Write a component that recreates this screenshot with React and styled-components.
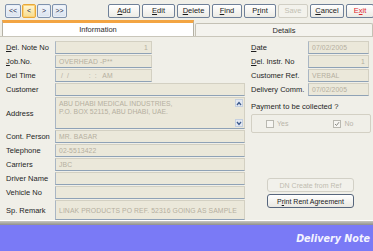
import React from "react";
import styled, { createGlobalStyle, css } from "styled-components";

const Global = createGlobalStyle`
  html, body { margin: 0; padding: 0; background: #f0efe8; }
  body { font-family: "Liberation Sans", Arial, sans-serif; }
`;

const Screen = styled.div`
  width: 373px;
  height: 251px;
  display: flex;
  flex-direction: column;
  background: #f0efe8;
  overflow: hidden;
`;

const Toolbar = styled.div`
  height: 21px;
  flex: none;
  display: flex;
  align-items: center;
  padding-left: 5px;
  box-sizing: border-box;
`;

const NavGroup = styled.div`
  display: flex;
  gap: 1px;
`;

const Actions = styled.div`
  display: flex;
  gap: 2px;
  margin-left: 41px;
`;

const buttonBase = css`
  box-sizing: border-box;
  height: 14px;
  display: flex;
  align-items: center;
  justify-content: center;
  font-size: 7.5px;
  border-radius: 2px;
  font-family: "Liberation Sans", Arial, sans-serif;
  white-space: nowrap;
`;

const NavButton = styled.div`
  ${buttonBase};
  width: ${(p) => p.$w}px;
  font-size: 7px;
  color: #1d2b4a;
  border: 1px solid ${(p) => (p.$focus ? "#e8a838" : "#7f92ad")};
  background: ${(p) =>
    p.$focus
      ? "linear-gradient(#fff7d6, #f7dc8c)"
      : "linear-gradient(#f4f7fb, #d9e2ee)"};
  box-shadow: inset 0 0 0 1px ${(p) => (p.$focus ? "#fbd27a" : "#e9eef6")};
`;

const ToolButton = styled.div`
  ${buttonBase};
  width: ${(p) => p.$w}px;
  color: ${(p) => (p.$disabled ? "#c2bfb3" : p.$danger ? "#e0242c" : "#1b1b1b")};
  border: 1px solid ${(p) => (p.$disabled ? "#d0cec4" : "#6f8098")};
  background: ${(p) =>
    p.$disabled ? "#f3f2ec" : "linear-gradient(#ffffff, #ecebe5)"};
  u { text-decoration: underline; }
`;

const TabBar = styled.div`
  height: 16px;
  flex: none;
  display: flex;
  align-items: flex-end;
  padding-left: 2px;
  box-sizing: border-box;
  border-bottom: 1px solid #c9c6ba;
`;

const Tab = styled.div`
  box-sizing: border-box;
  display: flex;
  align-items: center;
  justify-content: center;
  font-size: 7.5px;
  color: #2a2a2a;
  ${(p) =>
    p.$active
      ? css`
          width: 192px;
          height: 16px;
          background: #ffffff;
          border: 1px solid #b4b1a5;
          border-top: 3px solid #f3a543;
          border-bottom: none;
        `
      : css`
          flex: 1;
          height: 13px;
          margin-left: 1px;
          background: #f4f3ee;
          border: 1px solid #c4c1b5;
          border-bottom: none;
          border-radius: 2px 2px 0 0;
        `}
`;

const Content = styled.div`
  flex: 1;
  display: flex;
  padding: 4px 0 0 6px;
  box-sizing: border-box;
  border-bottom: 1px solid #ffffff;
`;

const LeftCol = styled.div`
  width: 239px;
  display: flex;
  flex-direction: column;
  gap: 1px;
`;

const RightCol = styled.div`
  margin-left: 6px;
  width: 120px;
  display: flex;
  flex-direction: column;
  gap: 1px;
`;

const Row = styled.div`
  display: flex;
  align-items: center;
  height: ${(p) => p.$h || 13}px;
`;

const Label = styled.div`
  width: ${(p) => p.$w || 49}px;
  flex: none;
  font-size: 7.5px;
  color: #1e1e1e;
  white-space: nowrap;
  u { text-decoration: underline; }
`;

const Field = styled.div`
  box-sizing: border-box;
  width: ${(p) => p.$w}px;
  height: 100%;
  flex: none;
  background: #ebe8da;
  border: 1px solid #d3d0c2;
  border-left-color: #a9b6c4;
  border-bottom-color: #8fa2b6;
  display: flex;
  align-items: center;
  justify-content: ${(p) => (p.$right ? "flex-end" : "flex-start")};
  padding: 0 3px;
  font-size: 6.8px;
  color: #b5af9f;
  white-space: pre;
  overflow: hidden;
  letter-spacing: 0.1px;
`;

const AreaField = styled.div`
  box-sizing: border-box;
  width: ${(p) => p.$w}px;
  height: 100%;
  background: #ebe8da;
  border: 1px solid #d3d0c2;
  border-left-color: #a9b6c4;
  border-bottom-color: #8fa2b6;
  display: flex;
  font-size: 6.8px;
  color: #b5af9f;
`;

const AreaText = styled.div`
  flex: 1;
  padding: 2px 3px;
  line-height: 8px;
`;

const ScrollBar = styled.div`
  width: 9px;
  display: flex;
  flex-direction: column;
  justify-content: space-between;
  padding: 1px 0;
`;

const ScrollBtn = styled.div`
  width: 8px;
  height: 8px;
  background: #e3e8f2;
  border: 1px solid #c5d0e0;
  box-sizing: border-box;
  display: flex;
  align-items: center;
  justify-content: center;
`;

const Question = styled.div`
  font-size: 7.6px;
  color: #1e1e1e;
  margin-top: 5px;
  height: 9px;
  white-space: nowrap;
`;

const Group = styled.div`
  margin-top: 2px;
  height: 19px;
  box-sizing: border-box;
  border: 1px solid #d3d0c4;
  border-radius: 2px;
  display: flex;
  align-items: center;
  padding-left: 14px;
  gap: 45px;
`;

const Check = styled.div`
  display: flex;
  align-items: center;
  gap: 3px;
  font-size: 7px;
  color: #b8b4a8;
`;

const Box = styled.div`
  width: 8px;
  height: 8px;
  box-sizing: border-box;
  border: 1px solid #b9b8b0;
  background: #f7f6f2;
  display: flex;
  align-items: center;
  justify-content: center;
`;

const SideButton = styled.div`
  ${buttonBase};
  height: 14px;
  width: 87px;
  margin-left: 16px;
  margin-top: ${(p) => p.$mt || 0}px;
  font-size: 7px;
  color: ${(p) => (p.$disabled ? "#bfbcb0" : "#1b1b1b")};
  border: 1px solid ${(p) => (p.$disabled ? "#d2d0c6" : "#56657c")};
  border-radius: 3px;
  background: ${(p) => (p.$disabled ? "#f2f1eb" : "linear-gradient(#ffffff, #e9e8e2)")};
  u { text-decoration: underline; }
`;

const Separator = styled.div`
  height: 4px;
  flex: none;
  background: linear-gradient(#c8c7c0, #8f8f8b);
`;

const Footer = styled.div`
  height: 26px;
  flex: none;
  background: #7a7af6;
  display: flex;
  align-items: center;
  justify-content: flex-end;
  padding-right: 3px;
`;

const FooterTitle = styled.div`
  font-family: "DejaVu Sans", Verdana, sans-serif;
  font-style: italic;
  font-weight: bold;
  font-size: 9.6px;
  color: #f4f4ff;
`;

const Chevron = ({ up }) => (
  <svg width="6" height="5" viewBox="0 0 6 5">
    <path
      d={up ? "M1 4 L3 1.5 L5 4" : "M1 1 L3 3.5 L5 1"}
      stroke="#3b5a8c"
      strokeWidth="1.3"
      fill="none"
    />
  </svg>
);

export default function App() {
  const left = [
    { l: <><u>D</u>el. Note No</>, v: "1", w: 97, right: true },
    { l: <><u>J</u>ob.No.</>, v: "OVERHEAD -P**", w: 97 },
    { l: "Del Time", v: " /  /          :  :   AM", w: 97 },
    { l: "Customer", v: "", w: 190 },
  ];
  const left2 = [
    { l: "Cont. Person", v: "MR. BASAR" },
    { l: "Telephone", v: "02-5513422" },
    { l: "Carriers", v: "JBC" },
    { l: "Driver Name", v: "" },
    { l: "Vehicle No", v: "" },
  ];
  const right = [
    { l: <><u>D</u>ate</>, v: "07/02/2005" },
    { l: <><u>D</u>el. Instr. No</>, v: "1", right: true },
    { l: "Customer Ref.", v: "VERBAL" },
    { l: "Delivery Comm.", v: "07/02/2005" },
  ];
  return (
    <>
      <Global />
      <Screen>
        <Toolbar>
          <NavGroup>
            <NavButton $w={16}>&lt;&lt;</NavButton>
            <NavButton $w={14} $focus>&lt;</NavButton>
            <NavButton $w={14}>&gt;</NavButton>
            <NavButton $w={15}>&gt;&gt;</NavButton>
          </NavGroup>
          <Actions>
            <ToolButton $w={32}><u>A</u>dd</ToolButton>
            <ToolButton $w={33}><u>E</u>dit</ToolButton>
            <ToolButton $w={33}><u>D</u>elete</ToolButton>
            <ToolButton $w={30}><u>F</u>ind</ToolButton>
            <ToolButton $w={32}>P<u>r</u>int</ToolButton>
            <ToolButton $w={30} $disabled>Save</ToolButton>
            <ToolButton $w={34}><u>C</u>ancel</ToolButton>
            <ToolButton $w={28} $danger>E<u>x</u>it</ToolButton>
          </Actions>
        </Toolbar>
        <TabBar>
          <Tab $active>Information</Tab>
          <Tab>Details</Tab>
        </TabBar>
        <Content>
          <LeftCol>
            {left.map((r, i) => (
              <Row key={i}>
                <Label>{r.l}</Label>
                <Field $w={r.w} $right={r.right}>{r.v}</Field>
              </Row>
            ))}
            <Row $h={32}>
              <Label>Address</Label>
              <AreaField $w={190}>
                <AreaText>
                  ABU DHABI MEDICAL INDUSTRIES,
                  <br />
                  P.O. BOX 52115, ABU DHABI, UAE.
                </AreaText>
                <ScrollBar>
                  <ScrollBtn><Chevron up /></ScrollBtn>
                  <ScrollBtn><Chevron /></ScrollBtn>
                </ScrollBar>
              </AreaField>
            </Row>
            {left2.map((r, i) => (
              <Row key={i}>
                <Label>{r.l}</Label>
                <Field $w={190}>{r.v}</Field>
              </Row>
            ))}
            <Row $h={20}>
              <Label>Sp. Remark</Label>
              <Field $w={190}>LINAK PRODUCTS PO REF. 52316 GOING AS SAMPLE</Field>
            </Row>
          </LeftCol>
          <RightCol>
            {right.map((r, i) => (
              <Row key={i}>
                <Label $w={57}>{r.l}</Label>
                <Field $w={61} $right={r.right}>{r.v}</Field>
              </Row>
            ))}
            <Question>Payment to be collected ?</Question>
            <Group>
              <Check><Box />Yes</Check>
              <Check>
                <Box>
                  <svg width="6" height="6" viewBox="0 0 6 6">
                    <path d="M1 3 L2.5 4.5 L5 1.2" stroke="#8a8a84" strokeWidth="1" fill="none" />
                  </svg>
                </Box>
                No
              </Check>
            </Group>
            <SideButton $disabled $mt={44}>DN Create from Ref</SideButton>
            <SideButton $mt={1}>P<u>r</u>int Rent Agreement</SideButton>
          </RightCol>
        </Content>
        <Separator />
        <Footer>
          <FooterTitle>Delivery Note</FooterTitle>
        </Footer>
      </Screen>
    </>
  );
}
